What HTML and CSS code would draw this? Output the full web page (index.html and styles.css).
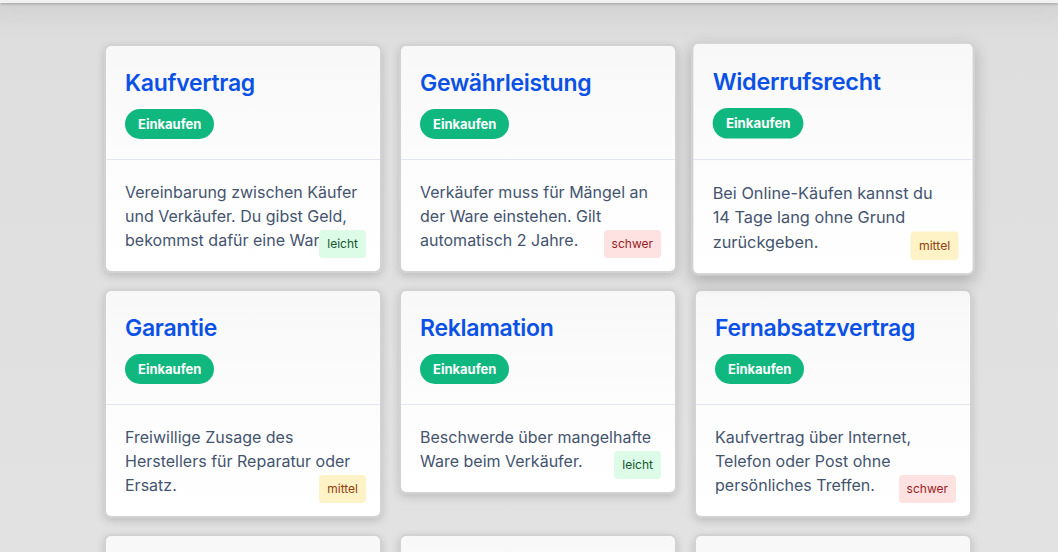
FILE: index.html
```html
<!DOCTYPE html>
<html lang="de">
<head>
<meta charset="utf-8">
<title>Begriffe – Einkaufen</title>
<link rel="stylesheet" href="styles.css">
</head>
<body>
<header class="topbar"></header>
<main class="page">
  <section class="grid">
    <article class="card">
      <div class="card-head">
        <h3 class="card-title">Kaufvertrag</h3>
        <span class="badge">Einkaufen</span>
      </div>
      <div class="card-body">
        <p class="card-text">Vereinbarung zwischen Käufer und Verkäufer. Du gibst Geld, bekommst dafür eine Ware.</p>
        <span class="level level-easy">leicht</span>
      </div>
    </article>
    <article class="card">
      <div class="card-head">
        <h3 class="card-title">Gewährleistung</h3>
        <span class="badge">Einkaufen</span>
      </div>
      <div class="card-body">
        <p class="card-text">Verkäufer muss für Mängel an der Ware einstehen. Gilt automatisch 2 Jahre.</p>
        <span class="level level-hard">schwer</span>
      </div>
    </article>
    <article class="card card-hover">
      <div class="card-head">
        <h3 class="card-title">Widerrufsrecht</h3>
        <span class="badge">Einkaufen</span>
      </div>
      <div class="card-body">
        <p class="card-text">Bei Online-Käufen kannst du 14 Tage lang ohne Grund zurückgeben.</p>
        <span class="level level-mid">mittel</span>
      </div>
    </article>
    <article class="card">
      <div class="card-head">
        <h3 class="card-title">Garantie</h3>
        <span class="badge">Einkaufen</span>
      </div>
      <div class="card-body">
        <p class="card-text">Freiwillige Zusage des Herstellers für Reparatur oder Ersatz.</p>
        <span class="level level-mid">mittel</span>
      </div>
    </article>
    <article class="card">
      <div class="card-head">
        <h3 class="card-title">Reklamation</h3>
        <span class="badge">Einkaufen</span>
      </div>
      <div class="card-body">
        <p class="card-text">Beschwerde über mangelhafte Ware beim Verkäufer.</p>
        <span class="level level-easy">leicht</span>
      </div>
    </article>
    <article class="card">
      <div class="card-head">
        <h3 class="card-title">Fernabsatzvertrag</h3>
        <span class="badge">Einkaufen</span>
      </div>
      <div class="card-body">
        <p class="card-text">Kaufvertrag über Internet, Telefon oder Post ohne persönliches Treffen.</p>
        <span class="level level-hard">schwer</span>
      </div>
    </article>
    <article class="card">
      <div class="card-head">
        <h3 class="card-title">Umtausch</h3>
        <span class="badge">Einkaufen</span>
      </div>
      <div class="card-body">
        <p class="card-text">Freiwilliges Angebot des Händlers, Ware gegen andere zu tauschen.</p>
        <span class="level level-easy">leicht</span>
      </div>
    </article>
    <article class="card">
      <div class="card-head">
        <h3 class="card-title">Quittung</h3>
        <span class="badge">Einkaufen</span>
      </div>
      <div class="card-body">
        <p class="card-text">Beleg über den Kauf und die Zahlung.</p>
        <span class="level level-easy">leicht</span>
      </div>
    </article>
    <article class="card">
      <div class="card-head">
        <h3 class="card-title">Taschengeldparagraf</h3>
        <span class="badge">Einkaufen</span>
      </div>
      <div class="card-body">
        <p class="card-text">Minderjährige dürfen mit ihrem Taschengeld kleine Käufe tätigen.</p>
        <span class="level level-mid">mittel</span>
      </div>
    </article>
  </section>
</main>
</body>
</html>
```

FILE: styles.css
```css
* { box-sizing: border-box; }

html, body {
  margin: 0;
  padding: 0;
  height: 100%;
  overflow: hidden;
}

body {
  font-family: Inter, "Noto Sans", "Liberation Sans", sans-serif;
  background: linear-gradient(180deg, #d4d4d4 0px, #dedede 40px, #e2e2e2 100%);
  color: #475569;
}

.topbar {
  height: 3px;
  background: #f2f2f2;
  box-shadow: 0 1px 3px rgba(0, 0, 0, 0.25), 0 4px 24px rgba(0, 0, 0, 0.10);
}

.page {
  padding: 41px 0 0 104px;
}

.grid {
  display: grid;
  grid-template-columns: repeat(3, 278px);
  column-gap: 17px;
  row-gap: 16px;
  align-items: start;
}

.card {
  background: linear-gradient(180deg, #f8f8f8 0%, #fdfdfd 60%, #ffffff 100%);
  border: 2px solid #d2d2d2;
  border-radius: 7px;
  box-shadow: 0 3px 8px rgba(0, 0, 0, 0.16);
}

.card-hover {
  transform: scale(1.02);
  box-shadow: 0 6px 16px rgba(0, 0, 0, 0.22);
}

.card-head {
  padding: 23px 19px 20px;
  border-bottom: 1px solid #e3e6ee;
}

.card-title {
  margin: 0 0 12px;
  font-size: 23px;
  line-height: 28px;
  font-weight: 600;
  color: #0b51e6;
  letter-spacing: -0.3px;
}

.badge {
  display: inline-block;
  background: #10b77f;
  color: #ffffff;
  font-size: 13px;
  font-weight: 700;
  line-height: 18px;
  padding: 6px 13px;
  border-radius: 15px;
}

.card-body {
  position: relative;
  padding: 20px 19px 19px;
}

.card-text {
  margin: 0;
  font-size: 16px;
  line-height: 24px;
  color: #44546f;
}

.level {
  position: absolute;
  right: 14px;
  bottom: 13px;
  font-size: 12px;
  line-height: 16px;
  padding: 6px 8px;
  border-radius: 4px;
}

.level-easy { background: #dcfce7; color: #14532d; }
.level-mid  { background: #fef3c7; color: #92400e; }
.level-hard { background: #fee2e2; color: #991b1b; }
```
